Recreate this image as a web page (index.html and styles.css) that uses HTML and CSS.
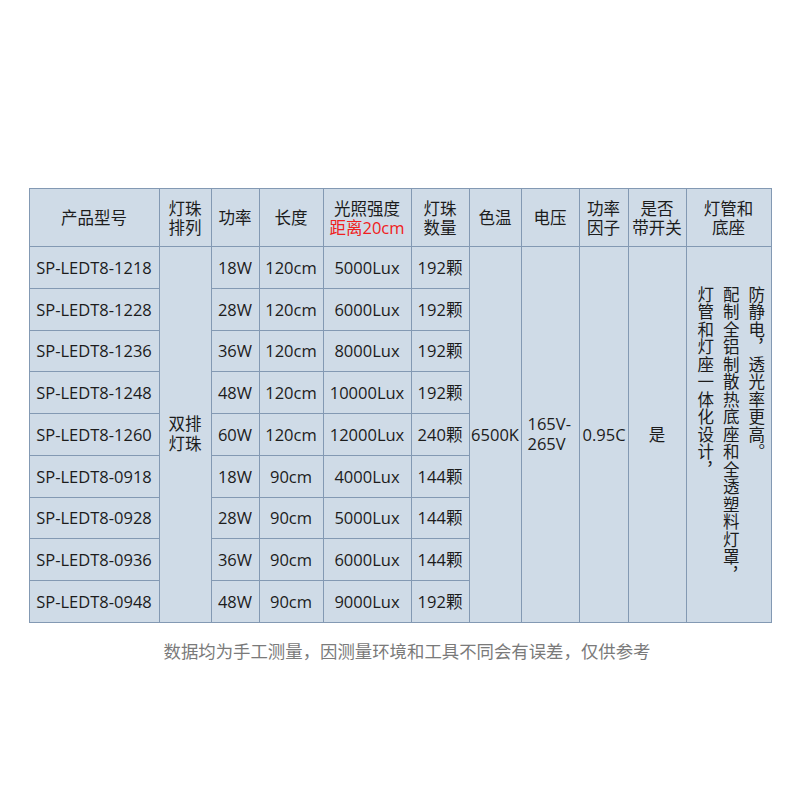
FILE: index.html
```html
<!DOCTYPE html>
<html lang="zh-CN">
<head>
<meta charset="utf-8">
<title>SP-LEDT8 参数表</title>
<link rel="stylesheet" href="styles.css">
</head>
<body>
<main class="page">
  <table class="spec">
    <colgroup>
      <col class="c-model"><col class="c-arr"><col class="c-pow"><col class="c-len"><col class="c-lux"><col class="c-cnt"><col class="c-temp"><col class="c-volt"><col class="c-pf"><col class="c-sw"><col class="c-base">
    </colgroup>
    <thead>
      <tr class="head">
        <th>产品型号</th>
        <th>灯珠<br>排列</th>
        <th>功率</th>
        <th>长度</th>
        <th>光照强度<br><span class="red">距离20cm</span></th>
        <th>灯珠<br>数量</th>
        <th>色温</th>
        <th>电压</th>
        <th>功率<br>因子</th>
        <th>是否<br>带开关</th>
        <th>灯管和<br>底座</th>
      </tr>
    </thead>
    <tbody>
      <tr>
        <td>SP-LEDT8-1218</td>
        <td rowspan="9" class="arr">双排<br>灯珠</td>
        <td>18W</td><td>120cm</td><td>5000Lux</td><td>192颗</td>
        <td rowspan="9">6500K</td>
        <td rowspan="9" class="volt">165V-<br>265V</td>
        <td rowspan="9" class="pf">0.95C</td>
        <td rowspan="9">是</td>
        <td rowspan="9" class="base"><div class="vert">防静电，透光率更高。<br>配制全铝制散热底座和全透塑料灯罩，<br>灯管和灯座一体化设计，</div></td>
      </tr>
      <tr><td>SP-LEDT8-1228</td><td>28W</td><td>120cm</td><td>6000Lux</td><td>192颗</td></tr>
      <tr><td>SP-LEDT8-1236</td><td>36W</td><td>120cm</td><td>8000Lux</td><td>192颗</td></tr>
      <tr><td>SP-LEDT8-1248</td><td>48W</td><td>120cm</td><td>10000Lux</td><td>192颗</td></tr>
      <tr><td>SP-LEDT8-1260</td><td>60W</td><td>120cm</td><td>12000Lux</td><td>240颗</td></tr>
      <tr><td>SP-LEDT8-0918</td><td>18W</td><td>90cm</td><td>4000Lux</td><td>144颗</td></tr>
      <tr><td>SP-LEDT8-0928</td><td>28W</td><td>90cm</td><td>5000Lux</td><td>144颗</td></tr>
      <tr><td>SP-LEDT8-0936</td><td>36W</td><td>90cm</td><td>6000Lux</td><td>144颗</td></tr>
      <tr><td>SP-LEDT8-0948</td><td>48W</td><td>90cm</td><td>9000Lux</td><td>192颗</td></tr>
    </tbody>
  </table>
  <p class="note">数据均为手工测量，因测量环境和工具不同会有误差，仅供参考</p>
</main>
</body>
</html>
```
FILE: styles.css
```css
html, body {
  margin: 0;
  padding: 0;
  background: #ffffff;
}
.page {
  width: 800px;
  padding-top: 188px;
  display: flex;
  flex-direction: column;
  align-items: center;
  font-family: "Open Sans", "Noto Sans CJK SC", sans-serif;
  color: #1c1c1c;
}
.spec {
  border-collapse: collapse;
  table-layout: fixed;
  width: 743px;
  background: #cfdbe7;
  font-size: 16.5px;
}
.spec th, .spec td {
  border: 1px solid #8399b3;
  padding: 0;
  text-align: center;
  vertical-align: middle;
  font-weight: normal;
  line-height: 19px;
  white-space: nowrap;
}
.spec th {
  font-size: 16.5px;
}
.head { height: 58px; }
.spec tbody tr { height: 41.78px; }
.c-model { width: 130px; }
.c-arr { width: 52px; }
.c-pow { width: 48px; }
.c-len { width: 64px; }
.c-lux { width: 88px; }
.c-cnt { width: 58px; }
.c-temp { width: 52px; }
.c-volt { width: 58px; }
.c-pf { width: 49px; }
.c-sw { width: 58px; }
.c-base { width: 85px; }
.red { color: #f02020; }
.spec td.arr {
  line-height: 20px;
}
.spec td.volt {
  text-align: left;
  padding-left: 6px;
  line-height: 20px;
}
.spec td.pf {
  text-align: left;
  padding-left: 3px;
}
.spec td.base {
  white-space: normal;
  padding-left: 4px;
}
.vert {
  writing-mode: vertical-rl;
  text-align: start;
  font-family: "Noto Sans CJK SC", sans-serif;
  font-size: 16.5px;
  line-height: 25.5px;
  letter-spacing: 1px;
  margin: 0 auto;
  white-space: nowrap;
}
.note {
  margin: 17px 0 0 14px;
  font-family: "Noto Sans CJK SC", sans-serif;
  font-size: 17.4px;
  color: #7a7a7a;
  line-height: 22px;
}
```
